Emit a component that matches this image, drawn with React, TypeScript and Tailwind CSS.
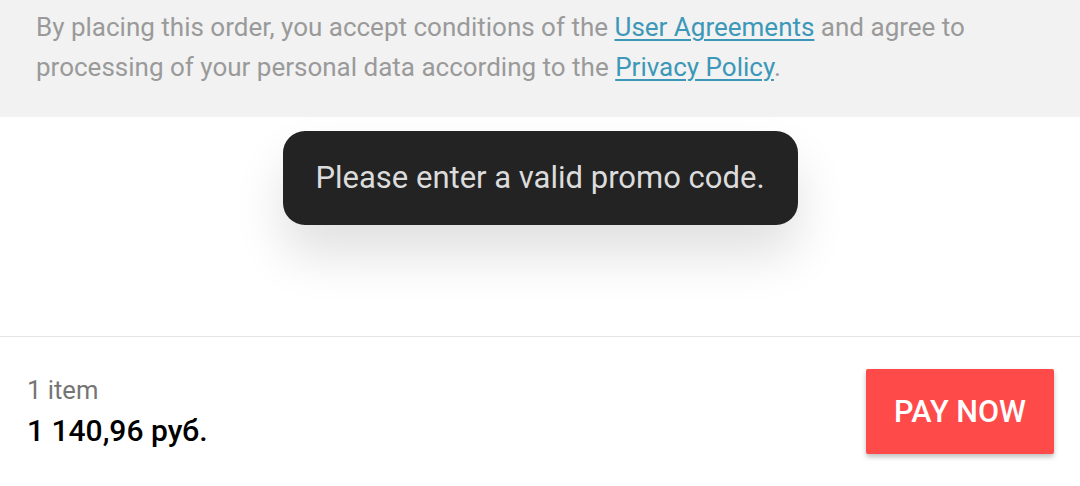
import React from "react";

export default function App() {
  return (
    <div className="relative w-[1080px] h-[486px] bg-white overflow-hidden" style={{ fontFamily: "Roboto, sans-serif" }}>
      <div className="h-[117px] bg-[#f2f2f2] pl-[36px] pr-[36px] pt-[7px]">
        <p className="text-[26px] leading-[40px] text-[#9a9a9a]">
          By placing this order, you accept conditions of the{" "}
          <span className="text-[#3c98b8] underline underline-offset-[3px] decoration-[2px]">User Agreements</span> and agree to processing of your personal data according to the{" "}
          <span className="text-[#3c98b8] underline underline-offset-[3px] decoration-[2px]">Privacy Policy</span>.
        </p>
      </div>
      <div className="h-[220px] border-b border-[#e6e6e6] flex justify-center">
        <div className="mt-[14px] h-[94px] w-[515px] rounded-[22px] bg-[#232323] flex items-center justify-center shadow-[0_30px_50px_rgba(0,0,0,0.12)]">
          <span className="text-[31px] text-[#dcdcdc]">Please enter a valid promo code.</span>
        </div>
      </div>
      <div className="flex items-center justify-between pl-[27px] pr-[26px] pt-[32px]">
        <div className="flex flex-col">
          <span className="text-[25.6px] leading-[30px] text-[#757575]">1 item</span>
          <span className="text-[30px] leading-[36px] mt-[8px] font-medium text-black">1 140,96 руб.</span>
        </div>
        <button className="w-[188px] h-[85px] bg-[#ff4a4a] rounded-[2px] text-white text-[30.6px] font-medium shadow-[0_3px_5px_rgba(0,0,0,0.25)]">
          PAY NOW
        </button>
      </div>
    </div>
  );
}
